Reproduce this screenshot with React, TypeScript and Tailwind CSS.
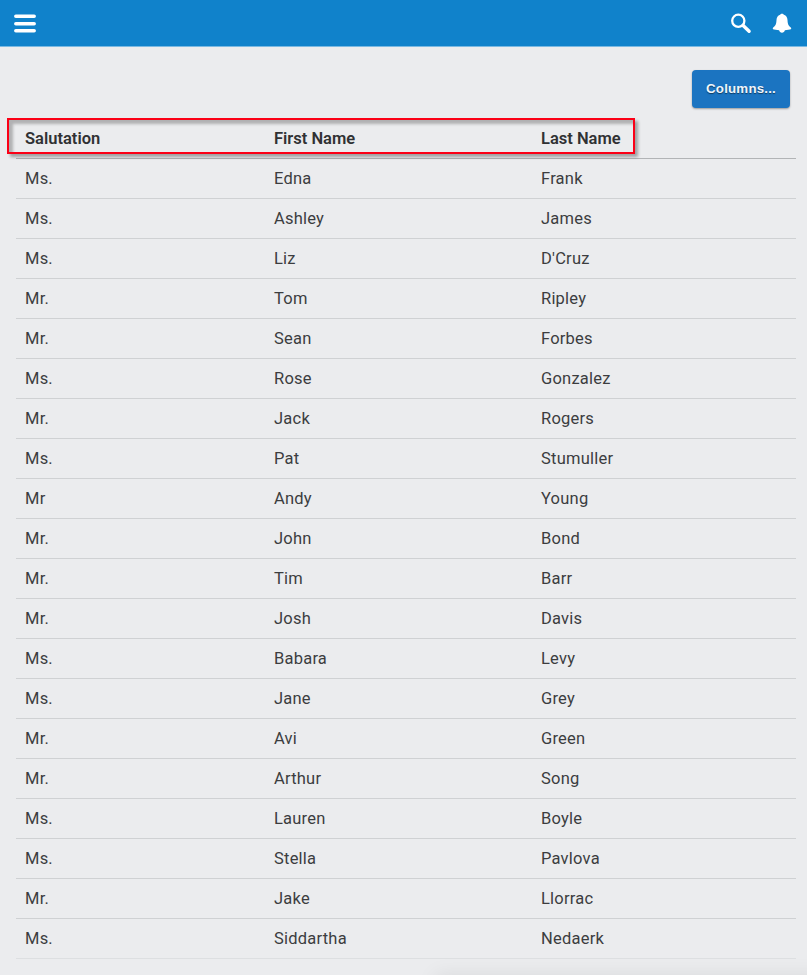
const contacts = [
  ["Ms.", "Edna", "Frank"],
  ["Ms.", "Ashley", "James"],
  ["Ms.", "Liz", "D'Cruz"],
  ["Mr.", "Tom", "Ripley"],
  ["Mr.", "Sean", "Forbes"],
  ["Ms.", "Rose", "Gonzalez"],
  ["Mr.", "Jack", "Rogers"],
  ["Ms.", "Pat", "Stumuller"],
  ["Mr", "Andy", "Young"],
  ["Mr.", "John", "Bond"],
  ["Mr.", "Tim", "Barr"],
  ["Mr.", "Josh", "Davis"],
  ["Ms.", "Babara", "Levy"],
  ["Ms.", "Jane", "Grey"],
  ["Mr.", "Avi", "Green"],
  ["Mr.", "Arthur", "Song"],
  ["Ms.", "Lauren", "Boyle"],
  ["Ms.", "Stella", "Pavlova"],
  ["Mr.", "Jake", "Llorrac"],
  ["Ms.", "Siddartha", "Nedaerk"],
];

function TopBar() {
  return (
    <header className="flex h-[47px] items-center justify-between border-b border-[#7ab9e2] bg-[#1082cb] pl-3.5 pr-[15px] text-white">
      <button aria-label="Menu">
        <svg width="22" height="20" viewBox="0 0 22 20" stroke="currentColor" strokeWidth="3.5" strokeLinecap="round">
          <path d="M1.8 3.2H20.2M1.8 10.7H20.2M1.8 17.8H20.2" />
        </svg>
      </button>
      <div className="flex items-center gap-5">
        <button aria-label="Search">
          <svg width="21" height="21" viewBox="0 0 21 21" fill="none" stroke="currentColor">
            <circle cx="7.3" cy="7.8" r="6.1" strokeWidth="2.3" />
            <path d="M12.1 12.5L18.1 18.3" strokeWidth="3.4" strokeLinecap="round" />
          </svg>
        </button>
        <button aria-label="Notifications">
          <svg width="20" height="21" viewBox="0 0 20 21" fill="currentColor">
            <path d="M10 .7C11 .7 11.6 1.1 11.9 1.8C14.3 2.5 15.4 4.4 15.5 7C15.7 10.8 16.2 12.5 18.8 14.5C19.7 15.3 19.2 16.4 18 16.4L12.9 17.3C12.5 18.8 11.5 19.8 10 19.8C8.5 19.8 7.5 18.8 7.1 17.3L2 16.4C.8 16.4.3 15.3 1.2 14.5C3.8 12.5 4.3 10.8 4.5 7C4.6 4.4 5.7 2.5 8.1 1.8C8.4 1.1 9 .7 10 .7Z" />
          </svg>
        </button>
      </div>
    </header>
  );
}

export default function App() {
  return (
    <div className="relative h-[975px] w-[807px] overflow-hidden bg-[#ebecee] font-['Roboto',sans-serif] text-[#3c3d3f]">
      <TopBar />

      <div className="flex justify-end pr-[17px] pt-[23px]">
        <button className="h-[38px] w-[98px] rounded-[4px] bg-[#1b74c1] font-['Liberation_Sans',sans-serif] text-[13.3px] font-bold tracking-[0.2px] text-[#eff5fb] shadow-[0_1px_2px_rgba(0,0,0,0.35)] [text-shadow:0_1px_1px_rgba(0,0,0,0.5)]">
          Columns...
        </button>
      </div>

      <main className="ml-4 mr-[11px] mt-[11px]">
        <table className="w-full table-fixed border-separate border-spacing-0 text-left text-[16.5px]">
          <colgroup>
            <col className="w-[249px]" />
            <col className="w-[267px]" />
            <col />
          </colgroup>
          <thead>
            <tr className="h-10 text-[#303133]">
              <th className="border-b border-[#b2b4b6] pb-0 pl-[9px] pt-0.5 font-semibold">Salutation</th>
              <th className="border-b border-[#b2b4b6] pb-0 pl-[9px] pt-0.5 font-semibold">First Name</th>
              <th className="border-b border-[#b2b4b6] pb-0 pl-[9px] pt-0.5 font-semibold">Last Name</th>
            </tr>
          </thead>
          <tbody className="tracking-[0.22px] [&>tr:last-child>td]:border-[#dddfe1]">
            {contacts.map(([salutation, firstName, lastName]) => (
              <tr key={lastName} className="h-10">
                <td className="border-b border-[#cfd1d3] pb-0 pl-[9px] pt-0.5">{salutation}</td>
                <td className="border-b border-[#cfd1d3] pb-0 pl-[9px] pt-0.5">{firstName}</td>
                <td className="border-b border-[#cfd1d3] pb-0 pl-[9px] pt-0.5">{lastName}</td>
              </tr>
            ))}
          </tbody>
        </table>
      </main>

      {/* Callout around the column headings */}
      <div className="pointer-events-none absolute left-[7px] top-[118px] h-9 w-[628px] border-2 border-[#fb0016] shadow-[3px_3px_3px_rgba(0,0,0,0.32),inset_4px_4px_3px_rgba(0,0,0,0.25)]" />
      {/* Shadow of the panel below the fold */}
      <div className="pointer-events-none absolute -bottom-5 left-[435px] h-5 w-[400px] shadow-[0_0_20px_rgba(0,0,0,0.08)]" />
    </div>
  );
}
